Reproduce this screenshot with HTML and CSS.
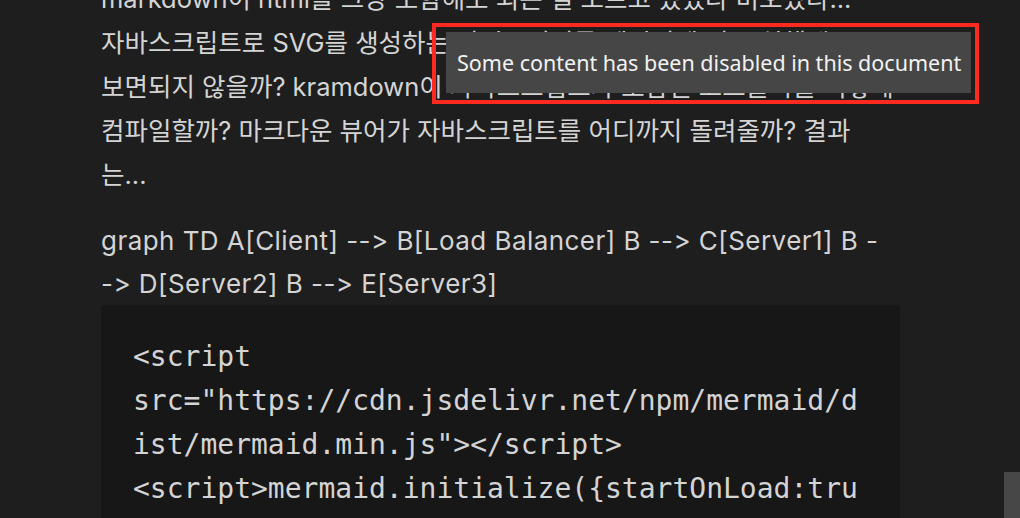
FILE: index.html
```html
<!DOCTYPE html>
<html lang="ko">
<head>
<meta charset="utf-8">
<title>Markdown Preview</title>
<link rel="stylesheet" href="styles.css">
</head>
<body>
<main class="preview">
  <p class="para first">markdown이 html을 그냥 포함해도 되는 걸 모르고 있었다 미오있다...<br>자바스크립트로 SVG를 생성하는 라이브러리를 페이지에 넣고 실행해<br>보면되지 않을까? kramdown이 자바스크립트가 포함된 코드블록을 어떻게<br>컴파일할까? 마크다운 뷰어가 자바스크립트를 어디까지 돌려줄까? 결과<br>는...</p>
  <div class="mermaid">graph TD A[Client] --&gt; B[Load Balancer] B --&gt; C[Server1] B --&gt; D[Server2] B --&gt; E[Server3]</div>
  <pre class="code"><code>&lt;script src="https://cdn.jsdelivr.net/npm/mermaid/dist/mermaid.min.js"&gt;&lt;/script&gt;
&lt;script&gt;mermaid.initialize({startOnLoad:true});&lt;/script&gt;</code></pre>
</main>
<div class="tooltip">Some content has been disabled in this document</div>
<div class="highlight"></div>
<div class="scroll-thumb"></div>
</body>
</html>
```
FILE: styles.css
```css
html, body {
  margin: 0;
  padding: 0;
  height: 100%;
  background: #1e1e1e;
  overflow: hidden;
}

body {
  font-family: "Inter", "Noto Sans CJK KR", sans-serif;
  font-feature-settings: "calt" 0, "liga" 0;
  font-variant-ligatures: none;
  color: #d4d4d4;
}

.preview {
  width: 799px;
  margin-left: 101px;
}

.para {
  margin: 0 0 22px;
  font-size: 25.5px;
  line-height: 44px;
  white-space: nowrap;
}

.first {
  margin-top: -23px;
}

.mermaid {
  max-width: 785px;
  font-size: 26px;
  letter-spacing: 0.45px;
  line-height: 43px;
}

.code {
  margin: 0;
  padding: 30px 32px;
  background: #171717;
  border-radius: 4px;
  font-family: "DejaVu Sans Mono", monospace;
  font-size: 28px;
  line-height: 44px;
  color: #d4d4d4;
  white-space: pre-wrap;
  overflow-wrap: break-word;
}

.tooltip {
  position: absolute;
  left: 446px;
  top: 32px;
  width: 525px;
  height: 61px;
  box-sizing: border-box;
  padding-left: 11px;
  display: flex;
  align-items: center;
  background: #464646;
  color: #f2f2f2;
  font-family: "Noto Sans", sans-serif;
  font-size: 21.5px;
}

.highlight {
  position: absolute;
  left: 432px;
  top: 23px;
  width: 547px;
  height: 81px;
  box-sizing: border-box;
  border: 4px solid #ff2a1f;
}

.scroll-thumb {
  position: absolute;
  left: 1004px;
  top: 472px;
  width: 16px;
  height: 46px;
  background: #474747;
}
```
